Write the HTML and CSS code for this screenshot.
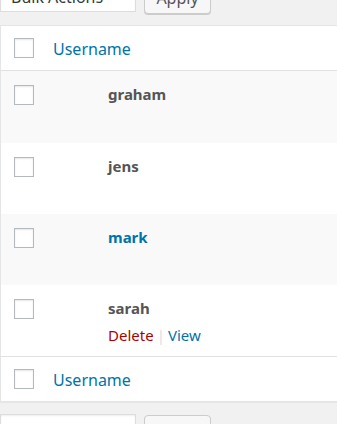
FILE: index.html
```html
<!DOCTYPE html>
<html>
<head>
<meta charset="utf-8">
<link rel="stylesheet" href="styles.css">
</head>
<body>
<div class="page">
  <div class="tablenav top">
    <div class="select">Bulk Actions</div>
    <div class="button">Apply</div>
  </div>
  <div class="list">
    <div class="head-row">
      <div class="cb"><span class="box"></span></div>
      <a class="col-title">Username</a>
    </div>
    <div class="row alt first">
      <div class="cb"><span class="box"></span></div>
      <div class="name"><strong>graham</strong></div>
    </div>
    <div class="row">
      <div class="cb"><span class="box"></span></div>
      <div class="name"><strong>jens</strong></div>
    </div>
    <div class="row alt">
      <div class="cb"><span class="box"></span></div>
      <div class="name"><strong class="link">mark</strong></div>
    </div>
    <div class="row">
      <div class="cb"><span class="box"></span></div>
      <div class="name">
        <strong>sarah</strong>
        <div class="actions"><span class="delete">Delete</span><span class="sep">|</span><span class="view">View</span></div>
      </div>
    </div>
    <div class="head-row foot">
      <div class="cb"><span class="box"></span></div>
      <a class="col-title">Username</a>
    </div>
  </div>
  <div class="tablenav bottom">
    <div class="select"></div>
    <div class="button"></div>
  </div>
</div>
</body>
</html>
```

FILE: styles.css
```css
html, body {
  margin: 0;
  padding: 0;
}
body {
  background: #f1f1f1;
  font-family: "Noto Sans", "Open Sans", sans-serif;
  font-size: 16px;
  color: #555;
  overflow: hidden;
  height: 424px;
}
.page {
  width: 420px;
}
.tablenav {
  display: flex;
  align-items: flex-start;
  height: 35px;
}
.tablenav.top {
  margin-top: -23px;
  margin-bottom: 13px;
}
.tablenav.bottom {
  margin-top: 12px;
}
.select {
  box-sizing: border-box;
  width: 136px;
  height: 35px;
  background: #fff;
  border: 1px solid #ddd;
  box-shadow: inset 0 1px 2px rgba(0,0,0,.07);
  padding: 5px 10px 0;
  line-height: 28px;
  color: #32373c;
  font-size: 16px;
  overflow: hidden;
}
.button {
  box-sizing: border-box;
  margin-left: 8px;
  width: 67px;
  height: 36px;
  background: #f7f7f7;
  border: 1px solid #ccc;
  border-radius: 4px;
  box-shadow: 0 1px 0 #ccc;
  text-align: center;
  padding-top: 5px;
  line-height: 28px;
  color: #555;
  font-size: 16px;
  margin-top: 1px;
  overflow: hidden;
}
.list {
  background: #fff;
  border: 1px solid #e5e5e5;
  border-right: none;
  box-shadow: 0 1px 1px rgba(0,0,0,.04);
}
.head-row {
  display: flex;
  align-items: center;
  height: 44px;
  border-bottom: 1px solid #e1e1e1;
}
.head-row.foot {
  border-bottom: none;
  border-top: 1px solid #e1e1e1;
}
.cb {
  width: 52px;
  flex: none;
  padding-left: 13px;
  box-sizing: border-box;
}
.box {
  display: block;
  box-sizing: border-box;
  width: 20px;
  height: 20px;
  background: #fff;
  border: 1px solid #b4b9be;
  box-shadow: inset 0 1px 2px rgba(0,0,0,.1);
}
.col-title {
  color: #0073aa;
  font-size: 16px;
  line-height: 20px;
  margin-top: 2px;
}
.row {
  display: flex;
  align-items: flex-start;
  height: 71px;
}
.row.first {
  height: 72px;
}
.row.alt {
  background: #f9f9f9;
}
.row .cb {
  padding-top: 14px;
}
.name {
  padding-left: 55px;
  padding-top: 12px;
  line-height: 22px;
}
.name strong {
  font-weight: 700;
  font-size: 15px;
  color: #555;
}
.name strong.link {
  color: #0073aa;
}
.actions {
  margin-top: 5px;
  font-size: 15px;
  line-height: 22px;
}
.delete {
  color: #a00;
}
.sep {
  color: #ddd;
  margin: 0 3px 0 3px;
}
.view {
  color: #0073aa;
}
```
